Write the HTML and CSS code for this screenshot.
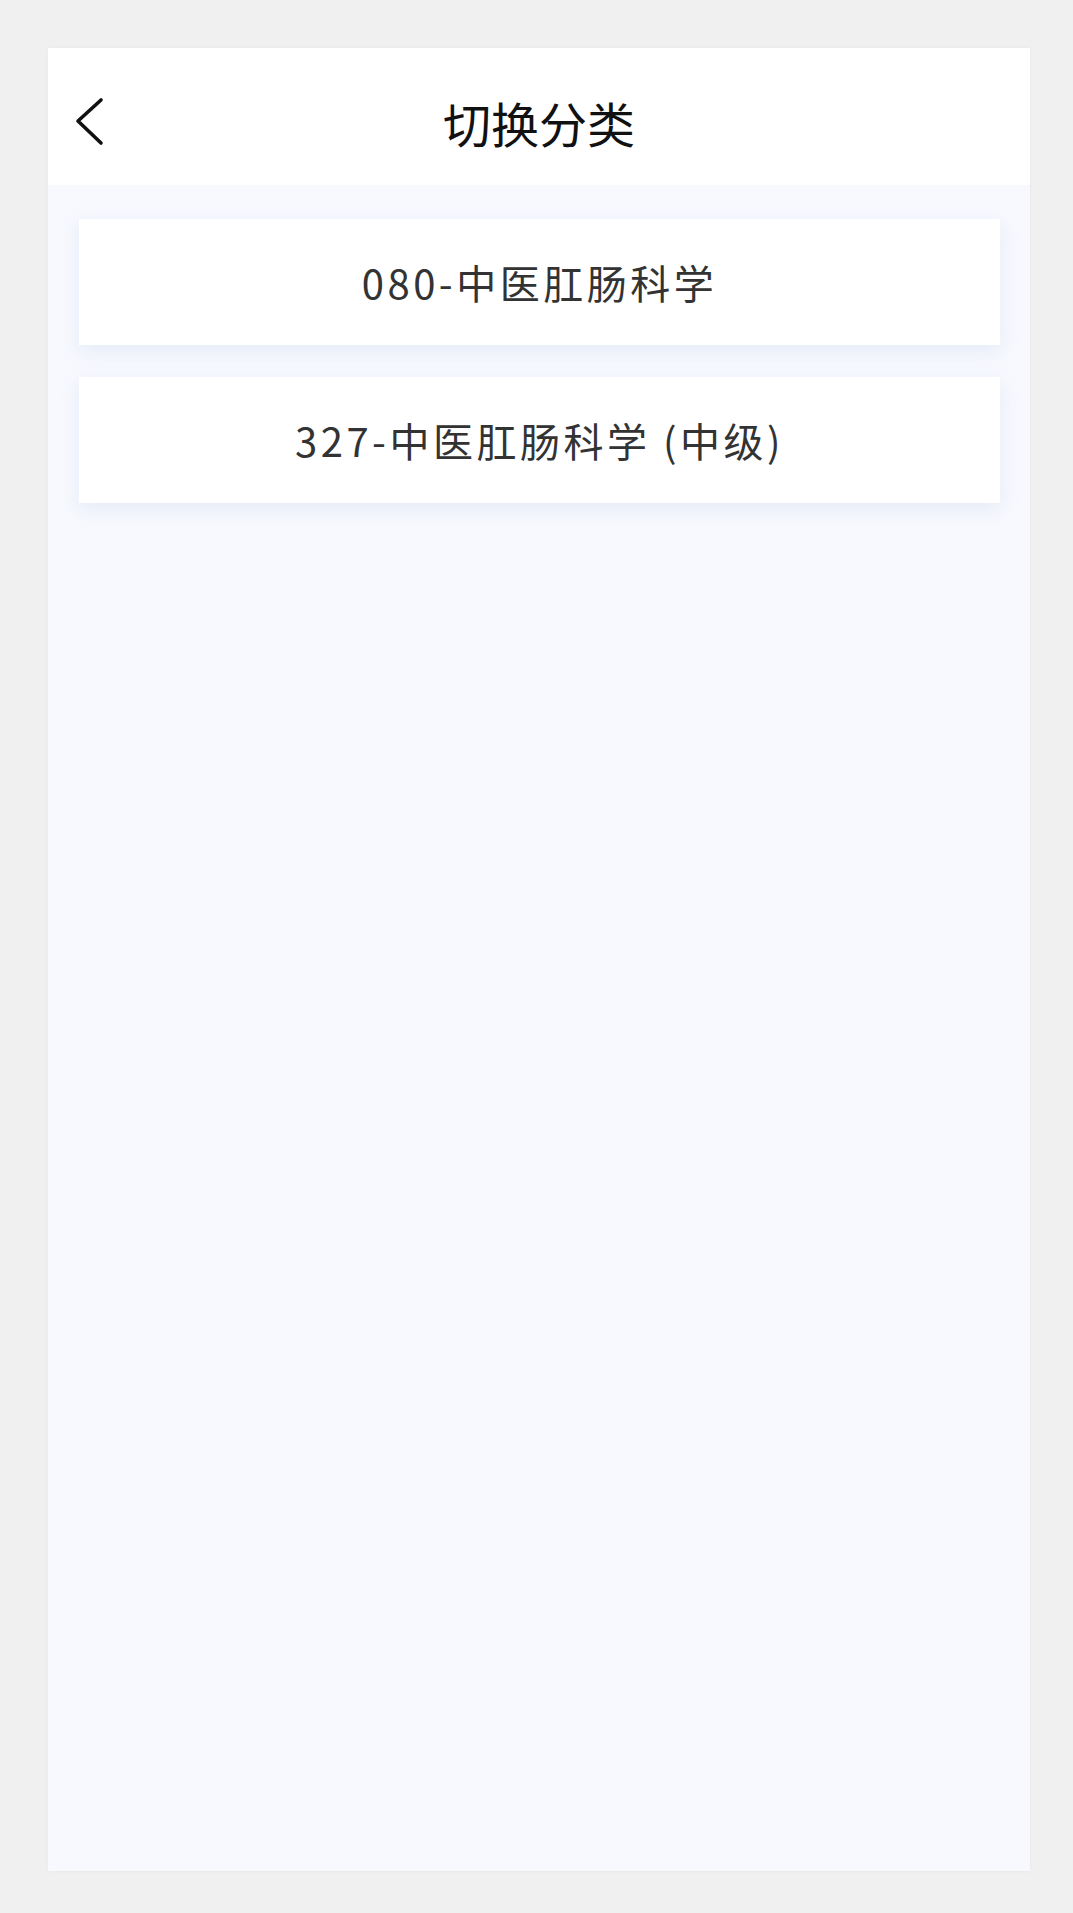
FILE: index.html
```html
<!DOCTYPE html>
<html>
<head>
<meta charset="utf-8">
<link rel="stylesheet" href="styles.css">
</head>
<body>
  <div class="page">
    <div class="top-bar">
      <div class="back-btn">
        <svg width="30" height="50" viewBox="0 0 30 50">
          <polyline points="27,3 4,24 27,46" fill="none" stroke="#111" stroke-width="3.6" stroke-linecap="round" stroke-linejoin="round"/>
        </svg>
      </div>
      <h1 class="title">切换分类</h1>
      <div></div>
    </div>
    <div class="category-list">
      <div class="category-item">080-中医肛肠科学</div>
      <div class="category-item">327-中医肛肠科学 (中级)</div>
    </div>
  </div>
</body>
</html>
```

FILE: styles.css
```css
/* switch category page */
body {
  margin: 0;
  padding: 48px 43px 42px 48px;
  background-color: #f0f0f0;
  font-family: "Noto Sans CJK SC", sans-serif;
}

.page {
  width: 982px;
  height: 1823px;
  background-color: #f8f9fe;
  box-shadow: 0 0 4px rgba(0, 0, 0, 0.04);
}

.top-bar {
  display: grid;
  grid-template-columns: 1fr auto 1fr;
  align-items: center;
  height: 127px;
  padding-top: 10px;
  background-color: #fff;
}

.back-btn {
  padding-left: 26px;
  display: flex;
  align-items: center;
}

.title {
  margin: 0;
  font-size: 48px;
  font-weight: normal;
  color: #111;
}

.category-list {
  display: flex;
  flex-direction: column;
  gap: 32px;
  padding: 34px 30px 0 31px;
}

.category-item {
  height: 126px;
  display: flex;
  align-items: center;
  justify-content: center;
  background-color: #fff;
  box-shadow: 0 6px 18px rgba(205, 218, 240, 0.45);
  font-size: 40px;
  letter-spacing: 3.5px;
  color: #333;
}
```
